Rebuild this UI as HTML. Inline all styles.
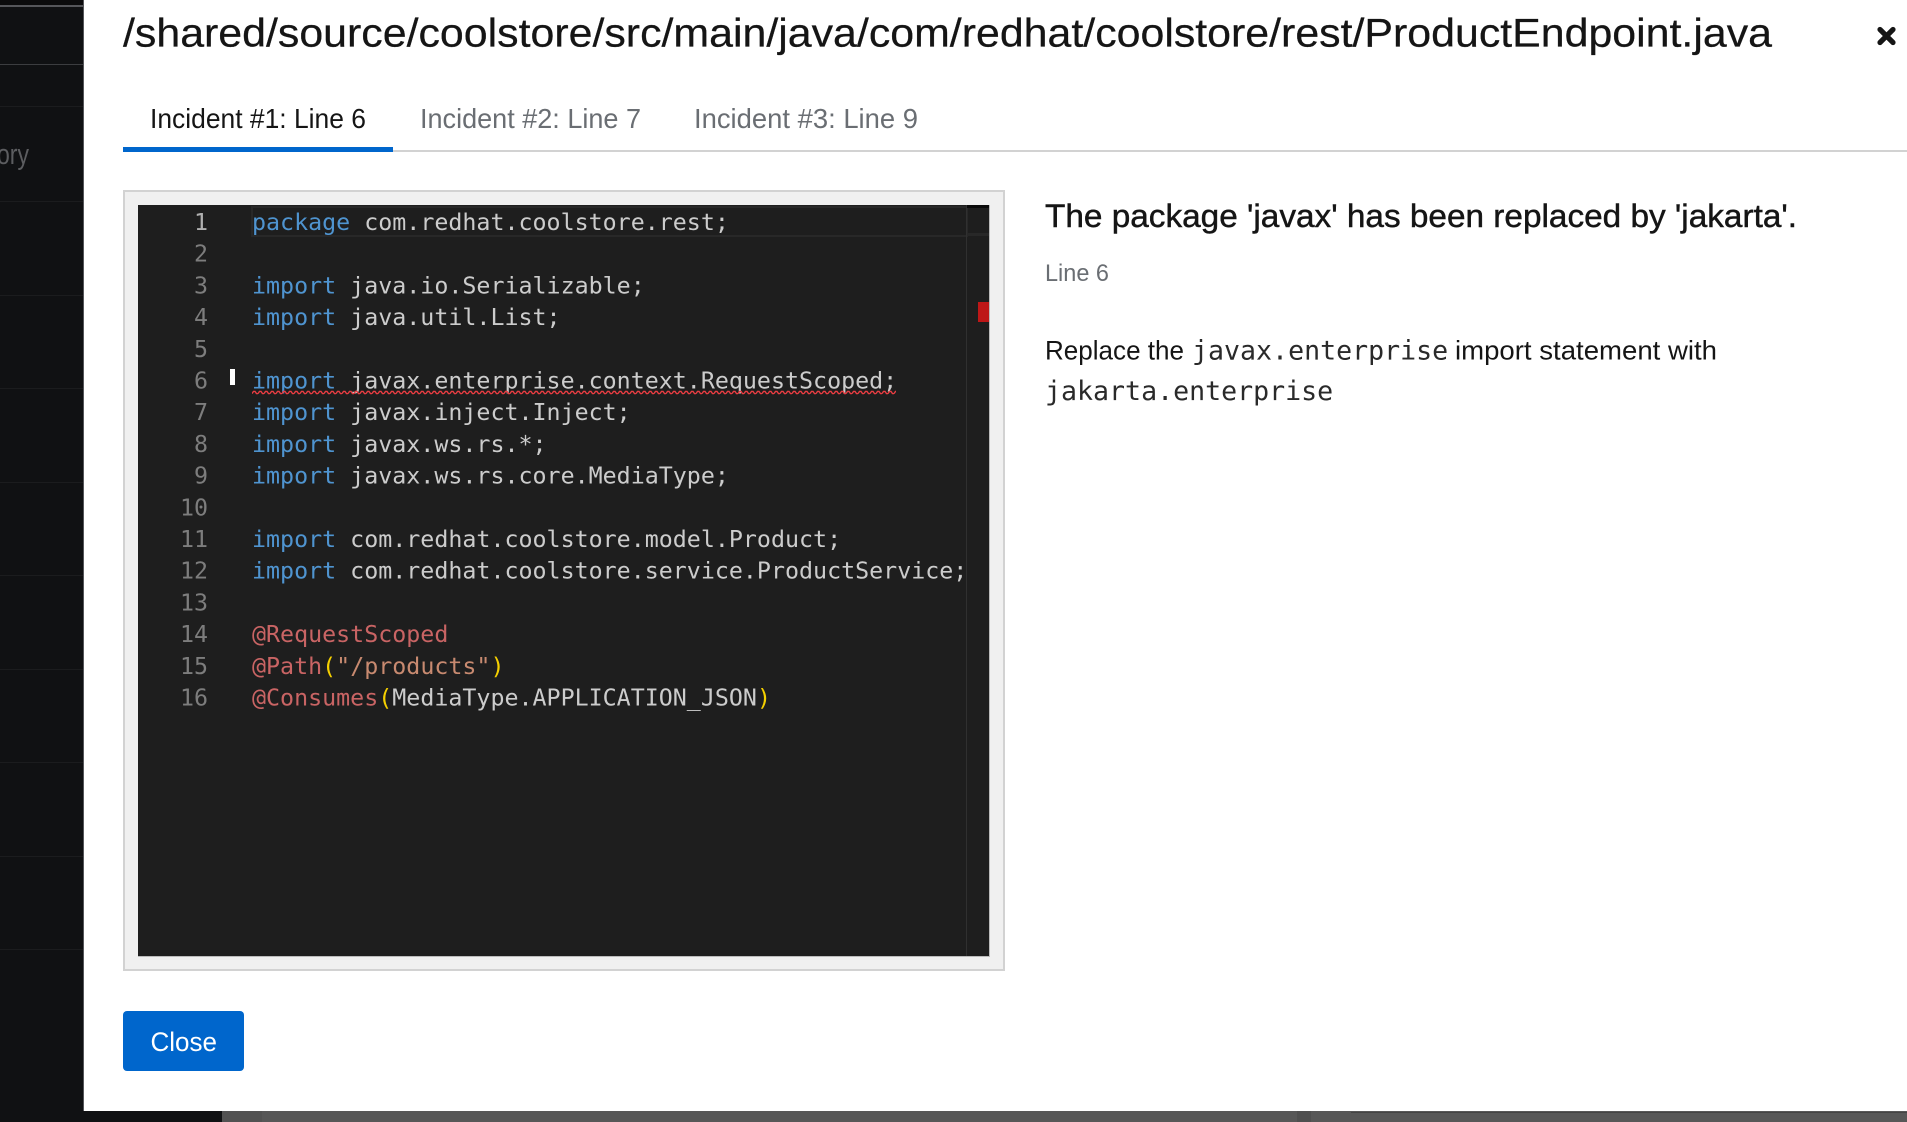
<!DOCTYPE html>
<html lang="en">
<head>
<meta charset="utf-8">
<title>ProductEndpoint.java</title>
<style>
html,body{margin:0;padding:0;width:1907px;height:1122px;overflow:hidden;background:#101113}
svg{display:block}
text{white-space:pre}
.s{font-family:"Liberation Sans",sans-serif}
.m{font-family:"DejaVu Sans Mono",monospace;font-size:23.3px;fill:#cccccc}
.n{font-family:"DejaVu Sans Mono",monospace;font-size:23.3px;fill:#7d7d7d;text-anchor:end}
.k{fill:#4f94d0}.a{fill:#c96464}.t{fill:#c88a70}.p{fill:#f5d000}
.c{font-family:"DejaVu Sans Mono",monospace;font-size:26.6px;fill:#2a2a2a}
</style>
</head>
<body>
<svg width="1907" height="1122" viewBox="0 0 1907 1122" xmlns="http://www.w3.org/2000/svg">
<defs>
<pattern id="sq" x="252" y="390" width="6" height="5" patternUnits="userSpaceOnUse">
<path d="M0 3.6 L1.5 1.4 L3 1.4 L4.5 3.6 L6 3.6" fill="none" stroke="#ea3d42" stroke-width="1.4"/>
</pattern>
</defs>
<!-- background -->
<rect width="1907" height="1122" fill="#101113"/>
<rect width="84" height="5" fill="#0b0b0c"/>
<rect y="5" width="84" height="2" fill="#55565a"/>
<rect y="64" width="84" height="1" fill="#3c3d40"/>
<g fill="#1b1c1e">
<rect y="106" width="84" height="1"/><rect y="201" width="84" height="1"/><rect y="295" width="84" height="1"/><rect y="388" width="84" height="1"/><rect y="482" width="84" height="1"/><rect y="575" width="84" height="1"/><rect y="669" width="84" height="1"/><rect y="762" width="84" height="1"/><rect y="856" width="84" height="1"/><rect y="949" width="84" height="1"/>
</g>
<text class="s" x="-3" y="164" font-size="29" fill="#5c5d60" textLength="32" lengthAdjust="spacingAndGlyphs">ory</text>
<!-- bottom strip -->
<rect x="222" y="1111" width="40" height="11" fill="#525252"/>
<rect x="262" y="1111" width="1645" height="11" fill="#575757"/>
<rect x="1297" y="1111" width="14" height="11" fill="#4f4f4f"/>
<rect x="1351" y="1112" width="556" height="1" fill="#444"/>
<!-- modal -->
<rect x="83" y="0" width="1" height="1111" fill="#55565a"/>
<rect x="84" y="0" width="1823" height="1111" fill="#fff"/>
<text class="s" x="123" y="46.7" font-size="39.5" fill="#151515" stroke="#151515" stroke-width="0.25" textLength="1649" lengthAdjust="spacingAndGlyphs">/shared/source/coolstore/src/main/java/com/redhat/coolstore/rest/ProductEndpoint.java</text>
<path d="M1880 29.5 L1893 42.5 M1893 29.5 L1880 42.5" stroke="#151515" stroke-width="5.2" stroke-linecap="round" fill="none"/>
<!-- tabs -->
<rect x="123" y="150" width="1784" height="2" fill="#d2d2d2"/>
<rect x="123" y="147" width="270" height="5" fill="#06c"/>
<text class="s" x="150" y="128" font-size="27.5" fill="#151515" textLength="216" lengthAdjust="spacingAndGlyphs">Incident #1: Line 6</text>
<text class="s" x="420" y="128" font-size="27.5" fill="#6a6e73" textLength="221" lengthAdjust="spacingAndGlyphs">Incident #2: Line 7</text>
<text class="s" x="694" y="128" font-size="27.5" fill="#6a6e73" textLength="224" lengthAdjust="spacingAndGlyphs">Incident #3: Line 9</text>
<!-- code frame -->
<rect x="124" y="191" width="880" height="779" fill="#f0f0f0" stroke="#d2d2d2" stroke-width="2"/>
<rect x="138" y="205" width="851" height="751" fill="#1e1e1e"/>
<rect x="138" y="956" width="852" height="1" fill="#bbb"/>
<rect x="989" y="205" width="1" height="752" fill="#bbb"/>
<rect x="252" y="207" width="715" height="29" fill="none" stroke="#282828" stroke-width="2"/>
<rect x="966" y="205" width="1" height="751" fill="#303030"/>
<rect x="967" y="233" width="22" height="3" fill="#282828"/>
<rect x="967" y="205" width="22" height="3" fill="#0a0a0a"/>
<rect x="978" y="302" width="11" height="20" fill="#be1717"/>
<rect x="230" y="369" width="5" height="16" fill="#fff"/>
<text class="n" x="208" y="230" style="fill:#b0b0b0">1</text>
<text class="n" x="208" y="261.7">2</text>
<text class="n" x="208" y="293.4">3</text>
<text class="n" x="208" y="325.1">4</text>
<text class="n" x="208" y="356.8">5</text>
<text class="n" x="208" y="388.5">6</text>
<text class="n" x="208" y="420.2">7</text>
<text class="n" x="208" y="451.9">8</text>
<text class="n" x="208" y="483.6">9</text>
<text class="n" x="208" y="515.3">10</text>
<text class="n" x="208" y="547">11</text>
<text class="n" x="208" y="578.7">12</text>
<text class="n" x="208" y="610.4">13</text>
<text class="n" x="208" y="642.1">14</text>
<text class="n" x="208" y="673.8">15</text>
<text class="n" x="208" y="705.5">16</text>
<text class="m" x="252" y="230"><tspan class="k">package</tspan> com.redhat.coolstore.rest;</text>
<text class="m" x="252" y="293.4"><tspan class="k">import</tspan> java.io.Serializable;</text>
<text class="m" x="252" y="325.1"><tspan class="k">import</tspan> java.util.List;</text>
<text class="m" x="252" y="388.5"><tspan class="k">import</tspan> javax.enterprise.context.RequestScoped;</text>
<rect x="252" y="390" width="644" height="5" fill="url(#sq)"/>
<text class="m" x="252" y="420.2"><tspan class="k">import</tspan> javax.inject.Inject;</text>
<text class="m" x="252" y="451.9"><tspan class="k">import</tspan> javax.ws.rs.*;</text>
<text class="m" x="252" y="483.6"><tspan class="k">import</tspan> javax.ws.rs.core.MediaType;</text>
<text class="m" x="252" y="547"><tspan class="k">import</tspan> com.redhat.coolstore.model.Product;</text>
<text class="m" x="252" y="578.7"><tspan class="k">import</tspan> com.redhat.coolstore.service.ProductService;</text>
<text class="m" x="252" y="642.1"><tspan class="a">@RequestScoped</tspan></text>
<text class="m" x="252" y="673.8"><tspan class="a">@Path</tspan><tspan class="p">(</tspan><tspan class="t">"/products"</tspan><tspan class="p">)</tspan></text>
<text class="m" x="252" y="705.5"><tspan class="a">@Consumes</tspan><tspan class="p">(</tspan>MediaType.APPLICATION_JSON<tspan class="p">)</tspan></text>
<!-- right column -->
<text class="s" x="1045" y="227" font-size="32.5" fill="#151515" stroke="#151515" stroke-width="0.45" textLength="752" lengthAdjust="spacingAndGlyphs">The package 'javax' has been replaced by 'jakarta'.</text>
<text class="s" x="1045" y="281" font-size="24.5" fill="#6a6e73" textLength="64" lengthAdjust="spacingAndGlyphs">Line 6</text>
<text class="s" x="1045" y="359.5" font-size="27" fill="#151515" textLength="139" lengthAdjust="spacingAndGlyphs">Replace the</text>
<text class="c" x="1192" y="359.5">javax.enterprise</text>
<text class="s" x="1455" y="359.5" font-size="27" fill="#151515" textLength="262" lengthAdjust="spacingAndGlyphs">import statement with</text>
<text class="c" x="1045" y="400">jakarta.enterprise</text>
<!-- close button -->
<rect x="123" y="1011" width="121" height="60" rx="4" fill="#06c"/>
<text class="s" x="150.5" y="1051" font-size="27" fill="#fff" textLength="66.5" lengthAdjust="spacingAndGlyphs">Close</text>
</svg>
</body>
</html>
